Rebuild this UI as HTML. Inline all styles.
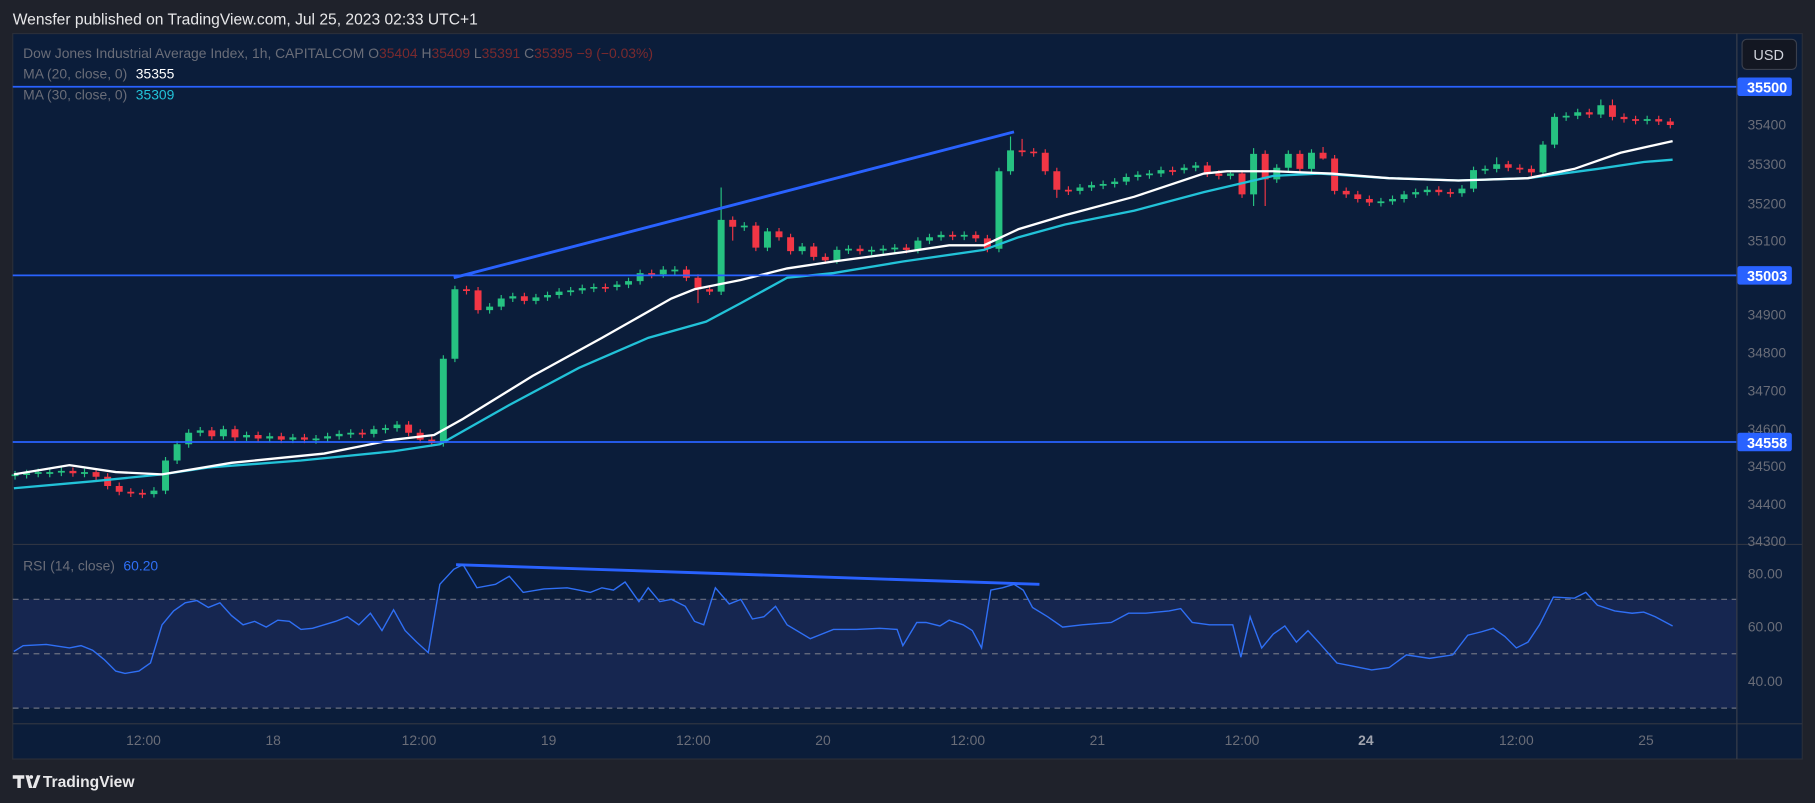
<!DOCTYPE html>
<html><head><meta charset="utf-8"><style>
html,body{margin:0;padding:0;background:#1f222b;overflow:hidden}
svg{display:block;font-family:"Liberation Sans",sans-serif}
</style></head><body>
<svg width="1815" height="803" viewBox="0 0 1568 694" preserveAspectRatio="none" xmlns="http://www.w3.org/2000/svg">
<rect width="1568" height="694" fill="#1f222b"/>
<text x="11" y="21" font-size="13.5" fill="#e8e8ea">Wensfer published on TradingView.com, Jul 25, 2023 02:33 UTC+1</text>
<rect x="11" y="29" width="1546" height="627" fill="#0b1d3a" stroke="#2a2e39"/>
<rect x="11" y="518" width="1489" height="94" fill="#162650"/>
<g stroke="#6b7080" stroke-dasharray="5,4" stroke-width="1">
<line x1="11" y1="518" x2="1500" y2="518"/><line x1="11" y1="565" x2="1500" y2="565"/><line x1="11" y1="612" x2="1500" y2="612"/></g>
<line x1="11" y1="470.5" x2="1557" y2="470.5" stroke="#2f3442"/>
<line x1="11" y1="625.5" x2="1557" y2="625.5" stroke="#2f3442"/>
<line x1="1500.5" y1="29" x2="1500.5" y2="656" stroke="#3a3f4c"/>
<path fill="none" stroke="#26c281" stroke-width="1" d="M13 407v7.5M23 406v7.5M33 405v7.5M43 405v7.5M53 404v7.5M73 405v7.5M133 421v9M143 395v32M153 381v20M163 371v16M173 369v8M193 368v12M213 373v8M233 374v8M253 375v8M273 376v7.5M283 374v8M293 372v8M303 371v7.5M323 368v10M333 367v7.5M343 364v9M383 307v79M393 247v66M423 262v9M433 255v13M443 253v8M463 254v9M473 252v8M483 249v9M493 248v7.5M503 246v8M513 245v7.5M533 243v8M543 240v9M553 233v13M573 230v10M583 230v7.5M623 162v93M643 192v7.5M663 197v20M693 210v10M723 213v15M733 212v7.5M753 213v7.5M763 212v7.5M773 211v7.5M793 205v14M803 202v9M813 200v8M833 200v7.5M863 145v73M873 118v33M933 159v9M943 157v8M953 156v7.5M963 154v8M973 150v10M983 148v8M993 147v7.5M1003 144v9M1023 142v8M1033 140v8M1063 147v8M1083 128v50M1103 142v16M1113 130v18M1133 129v20M1193 171v7.5M1203 169v8M1213 165v10M1223 163v8M1233 161v8M1263 160v10M1273 144v22M1283 143v7.5M1293 136v13M1333 122v30M1343 98v30M1353 97v7.5M1363 94v9M1383 86v16M1423 100v7.5"/>
<path fill="#26c281" d="M10 410h6v1.5h-6zM20 409h6v1.5h-6zM30 408h6v1.5h-6zM40 408h6v1.5h-6zM50 407h6v1.5h-6zM70 408h6v1.5h-6zM130 424h6v3h-6zM140 398h6v26h-6zM150 384h6v14h-6zM160 374h6v10h-6zM170 372h6v2h-6zM190 371h6v6h-6zM210 376h6v2h-6zM230 377h6v2h-6zM250 378h6v2h-6zM270 379h6v1.5h-6zM280 377h6v2h-6zM290 375h6v2h-6zM300 374h6v1.5h-6zM320 371h6v4h-6zM330 370h6v1.5h-6zM340 367h6v3h-6zM380 310h6v73h-6zM390 250h6v60h-6zM420 265h6v3h-6zM430 258h6v7h-6zM440 256h6v2h-6zM460 257h6v3h-6zM470 255h6v2h-6zM480 252h6v3h-6zM490 251h6v1.5h-6zM500 249h6v2h-6zM510 248h6v1.5h-6zM530 246h6v2h-6zM540 243h6v3h-6zM550 236h6v7h-6zM570 233h6v4h-6zM580 233h6v1.5h-6zM620 190h6v62h-6zM640 195h6v1.5h-6zM660 200h6v14h-6zM690 213h6v4h-6zM720 216h6v9h-6zM730 215h6v1.5h-6zM750 216h6v1.5h-6zM760 215h6v1.5h-6zM770 214h6v1.5h-6zM790 208h6v8h-6zM800 205h6v3h-6zM810 203h6v2h-6zM830 203h6v1.5h-6zM860 148h6v67h-6zM870 130h6v18h-6zM930 162h6v3h-6zM940 160h6v2h-6zM950 159h6v1.5h-6zM960 157h6v2h-6zM970 153h6v4h-6zM980 151h6v2h-6zM990 150h6v1.5h-6zM1000 147h6v3h-6zM1020 145h6v2h-6zM1030 143h6v2h-6zM1060 150h6v2h-6zM1080 133h6v35h-6zM1100 145h6v10h-6zM1110 133h6v12h-6zM1130 132h6v14h-6zM1190 174h6v1.5h-6zM1200 172h6v2h-6zM1210 168h6v4h-6zM1220 166h6v2h-6zM1230 164h6v2h-6zM1260 163h6v4h-6zM1270 147h6v16h-6zM1280 146h6v1.5h-6zM1290 142h6v4h-6zM1330 125h6v24h-6zM1340 101h6v24h-6zM1350 100h6v1.5h-6zM1360 97h6v3h-6zM1380 91h6v8h-6zM1420 103h6v1.5h-6z"/>
<path fill="none" stroke="#f23645" stroke-width="1" d="M63 404v8M83 405v10M93 409v14M103 417v11M113 422v7.5M123 423v7.5M183 369v11M203 368v13M223 373v9M243 374v9M263 375v8M313 371v7.5M353 364v13M363 371v12M373 377v9M403 247v7.5M413 248v23M453 253v10M523 245v7.5M563 233v7.5M593 230v13M603 237v25M613 247v8M633 187v21M653 192v25M673 197v11M683 202v18M703 210v15M713 219v9M743 212v8M783 211v8M823 200v7.5M843 200v9M853 203v15M883 120v15M893 128v7.5M903 129v22M913 145v26M923 161v7.5M1013 144v7.5M1043 140v13M1053 147v8M1073 147v24M1093 130v48M1123 130v19M1143 127v11M1153 134v34M1163 162v9M1173 165v10M1183 169v9M1243 161v8M1253 163v7.5M1303 139v9M1313 142v7.5M1323 143v9M1373 94v8M1393 86v18M1403 98v8M1413 100v7.5M1433 100v8M1443 102v9"/>
<path fill="#f23645" d="M60 407h6v2h-6zM80 408h6v4h-6zM90 412h6v8h-6zM100 420h6v5h-6zM110 425h6v1.5h-6zM120 426h6v1.5h-6zM180 372h6v5h-6zM200 371h6v7h-6zM220 376h6v3h-6zM240 377h6v3h-6zM260 378h6v2h-6zM310 374h6v1.5h-6zM350 367h6v7h-6zM360 374h6v6h-6zM370 380h6v3h-6zM400 250h6v1.5h-6zM410 251h6v17h-6zM450 256h6v4h-6zM520 248h6v1.5h-6zM560 236h6v1.5h-6zM590 233h6v7h-6zM600 240h6v10h-6zM610 250h6v2h-6zM630 190h6v6h-6zM650 195h6v19h-6zM670 200h6v5h-6zM680 205h6v12h-6zM700 213h6v9h-6zM710 222h6v3h-6zM740 215h6v2h-6zM780 214h6v2h-6zM820 203h6v1.5h-6zM840 203h6v3h-6zM850 206h6v9h-6zM880 130h6v1.5h-6zM890 131h6v1.5h-6zM900 132h6v16h-6zM910 148h6v16h-6zM920 164h6v1.5h-6zM1010 147h6v1.5h-6zM1040 143h6v7h-6zM1050 150h6v2h-6zM1070 150h6v18h-6zM1090 133h6v22h-6zM1120 133h6v13h-6zM1140 132h6v5h-6zM1150 137h6v28h-6zM1160 165h6v3h-6zM1170 168h6v4h-6zM1180 172h6v3h-6zM1240 164h6v2h-6zM1250 166h6v1.5h-6zM1300 142h6v3h-6zM1310 145h6v1.5h-6zM1320 146h6v3h-6zM1370 97h6v2h-6zM1390 91h6v10h-6zM1400 101h6v2h-6zM1410 103h6v1.5h-6zM1430 103h6v2h-6zM1440 105h6v3h-6z"/>
<polyline fill="none" stroke="#22c2d8" stroke-width="2" points="12,422 80,416 140,410 180,404 260,398 340,390 380,384 440,350 500,318 560,292 610,278 640,262 680,240 720,236 780,226 850,216 880,205 920,194 980,182 1040,166 1100,152 1140,150 1200,154 1260,156 1320,154 1380,146 1420,140 1445,138"/>
<polyline fill="none" stroke="#ffffff" stroke-width="2" points="12,410 60,402 100,408 140,410 200,400 280,392 340,380 375,376 400,362 460,325 520,292 580,258 600,250 640,242 680,232 720,226 780,218 820,212 850,212 880,198 920,186 980,170 1040,150 1060,148 1100,148 1150,150 1200,154 1260,156 1320,154 1360,146 1400,132 1445,122"/>
<g stroke="#2962ff" stroke-width="1.5">
<line x1="11" y1="75" x2="1500" y2="75"/><line x1="11" y1="238" x2="1500" y2="238"/><line x1="11" y1="382" x2="1500" y2="382"/></g>
<line x1="392" y1="240" x2="876" y2="114" stroke="#2962ff" stroke-width="2.5"/>
<line x1="394" y1="488" x2="898" y2="505" stroke="#2962ff" stroke-width="2.5"/>
<polyline fill="none" stroke="#2f6ff5" stroke-width="1.2" points="12,563 20,558 40,557 60,560 70,558 80,562 90,570 100,580 108,582 120,580 130,573 140,540 150,528 160,521 170,519 180,525 190,521 200,532 210,540 220,537 230,542 240,536 250,537 260,544 270,543 290,537 300,533 310,540 320,530 330,545 340,527 350,545 360,555 370,564 380,505 392,492 400,488 412,508 428,505 440,498 452,512 470,509 490,508 500,510 510,512 520,508 530,510 540,503 552,520 560,508 570,520 580,518 592,524 600,537 608,540 618,508 630,522 640,518 650,535 660,533 670,524 680,540 700,552 720,544 740,544 760,543 775,544 780,558 792,538 800,538 812,541 820,536 832,540 840,545 848,560 856,510 866,508 876,505 884,510 892,525 905,533 918,542 935,540 960,538 975,530 990,530 1010,528 1020,526 1030,538 1045,540 1065,540 1072,568 1080,533 1090,560 1100,548 1110,541 1120,555 1130,545 1140,556 1155,573 1170,576 1185,579 1200,577 1215,566 1235,569 1255,566 1268,549 1280,546 1290,543 1300,550 1310,560 1320,555 1330,540 1342,516 1360,517 1370,512 1380,523 1395,528 1410,530 1420,529 1430,533 1445,541"/>
<g font-size="12" fill="#6a6d78">
<text x="20" y="50">Dow Jones Industrial Average Index, 1h, CAPITALCOM <tspan>O</tspan><tspan fill="#7a2a2e">35404</tspan> H<tspan fill="#7a2a2e">35409</tspan> L<tspan fill="#7a2a2e">35391</tspan> C<tspan fill="#7a2a2e">35395</tspan> <tspan fill="#7a2a2e">−9 (−0.03%)</tspan></text>
<text x="20" y="68">MA (20, close, 0) <tspan fill="#fff" dx="4">35355</tspan></text>
<text x="20" y="86">MA (30, close, 0) <tspan fill="#22c2d8" dx="4">35309</tspan></text>
<text x="20" y="493">RSI (14, close) <tspan fill="#2f6ff5" dx="4">60.20</tspan></text>
</g>
<rect x="1505" y="34" width="47" height="26" rx="4" fill="#131722" stroke="#3a3f4c"/>
<text x="1528" y="52" font-size="12.5" fill="#d1d4dc" text-anchor="middle">USD</text>
<g font-size="12" fill="#6a6d78" text-anchor="end">
<text x="1543" y="112">35400</text><text x="1543" y="146">35300</text><text x="1543" y="180">35200</text><text x="1543" y="212">35100</text>
<text x="1543" y="276">34900</text><text x="1543" y="309">34800</text><text x="1543" y="342">34700</text><text x="1543" y="375">34600</text>
<text x="1543" y="407">34500</text><text x="1543" y="440">34400</text><text x="1543" y="472">34300</text>
<text x="1540" y="500">80.00</text><text x="1540" y="546">60.00</text><text x="1540" y="593">40.00</text>
</g>
<g font-size="12.5" font-weight="bold" fill="#fff" text-anchor="end">
<rect x="1501" y="67" width="47" height="16" rx="2" fill="#2962ff"/><text x="1544" y="80">35500</text>
<rect x="1501" y="230" width="47" height="16" rx="2" fill="#2962ff"/><text x="1544" y="243">35003</text>
<rect x="1501" y="374" width="47" height="16" rx="2" fill="#2962ff"/><text x="1544" y="387">34558</text>
</g>
<g font-size="12" fill="#6a6d78" text-anchor="middle">
<text x="124" y="644">12:00</text><text x="236" y="644">18</text><text x="362" y="644">12:00</text><text x="474" y="644">19</text>
<text x="599" y="644">12:00</text><text x="711" y="644">20</text><text x="836" y="644">12:00</text><text x="948" y="644">21</text>
<text x="1073" y="644">12:00</text><text x="1180" y="644" fill="#a0a3ad" font-weight="bold">24</text><text x="1310" y="644">12:00</text><text x="1422" y="644">25</text>
</g>
<g fill="#e8e8ea"><path d="M11 670h10v3h-3v8h-3v-8h-4z"/><path d="M22 670h3l3 11h-3z"/><circle cx="27" cy="671.5" r="1.6"/><path d="M28 681l4-11h3l-4 11z"/></g>
<text x="37" y="680" font-size="13.5" font-weight="bold" fill="#e8e8ea">TradingView</text>
</svg>
</body></html>
